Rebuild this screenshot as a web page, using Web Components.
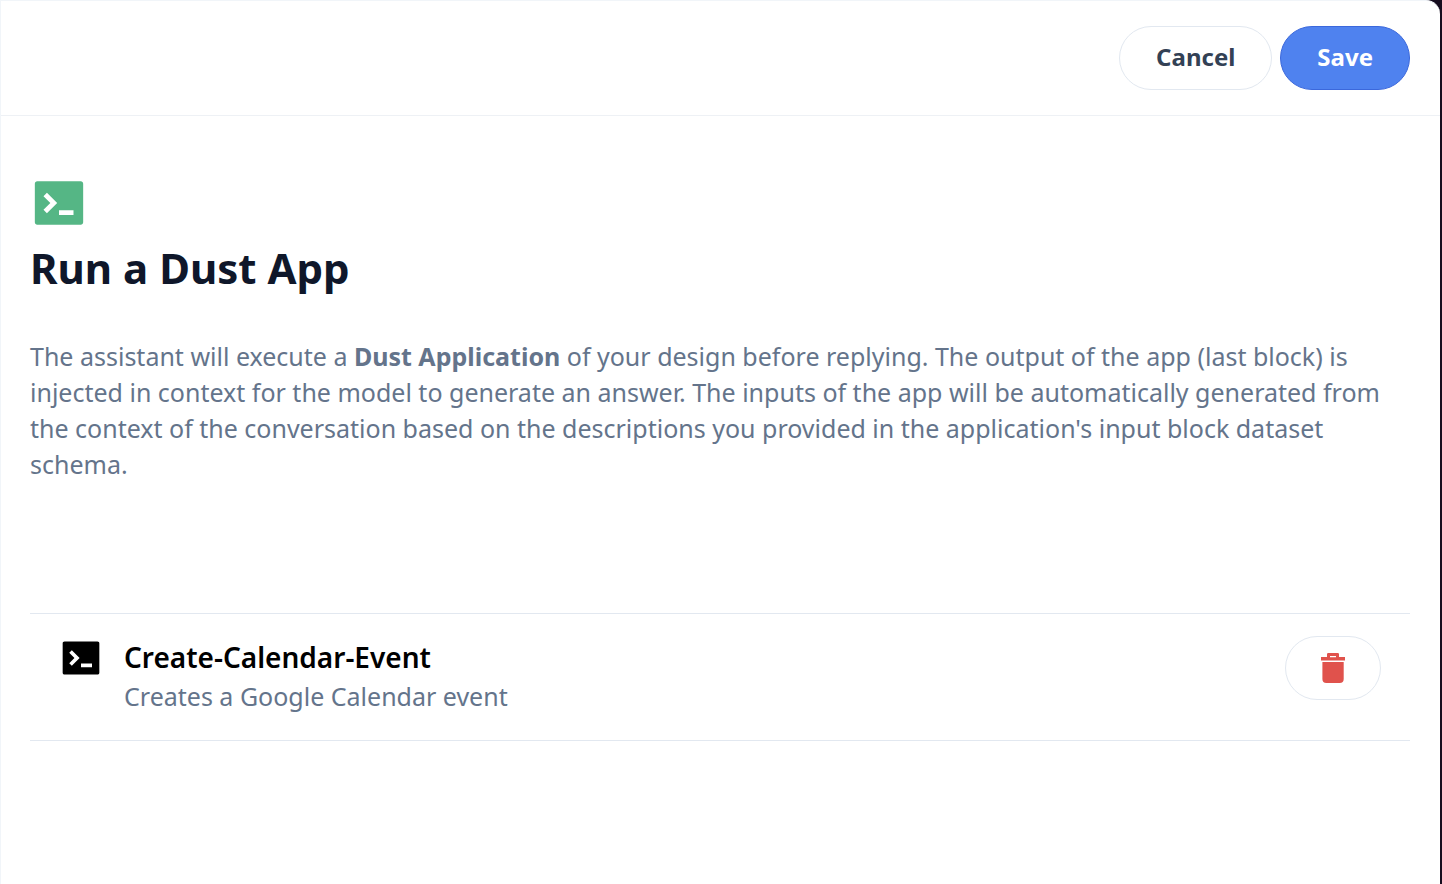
<!DOCTYPE html>
<html lang="en">
<head>
<meta charset="utf-8">
<meta name="viewport" content="width=device-width, initial-scale=1">
<title>Run a Dust App</title>
<style>
body { margin: 0; background: #160d1e; font-family: "Noto Sans", "Open Sans", sans-serif; color: #0f172a; }
</style>
</head>
<body>
<app-sheet>
  <pill-button slot="actions">Cancel</pill-button>
  <pill-button slot="actions" variant="primary">Save</pill-button>
  <action-intro heading="Run a Dust App">The assistant will execute a <strong>Dust Application</strong> of your design before replying. The output of the app (last block) is injected in context for the model to generate an answer. The inputs of the app will be automatically generated from the context of the conversation based on the descriptions you provided in the application's input block dataset schema.</action-intro>
  <app-item>
    <span slot="name">Create-Calendar-Event</span>
    <span slot="description">Creates a Google Calendar event</span>
  </app-item>
</app-sheet>
<script>
const define = (name, html, setup) => {
  const template = document.createElement('template');
  template.innerHTML = html;
  customElements.define(name, class extends HTMLElement {
    constructor() {
      super();
      this.attachShadow({ mode: 'open' }).append(template.content.cloneNode(true));
    }
    connectedCallback() {
      if (setup) setup(this, this.shadowRoot);
    }
  });
};

define('terminal-icon', `
<style>
  :host { display: block; width: var(--size, 24px); height: var(--size, 24px); flex: none; }
  svg { display: block; width: 100%; height: 100%; }
</style>
<svg viewBox="0 0 24 24" fill="currentColor" aria-hidden="true"><path d="M3 3H21C21.5523 3 22 3.44772 22 4V20C22 20.5523 21.5523 21 21 21H3C2.44772 21 2 20.5523 2 20V4C2 3.44772 2.44772 3 3 3ZM12 15V17H18V15H12ZM8.41421 12L5.58579 14.8284L7 16.2426L11.2426 12L7 7.75736L5.58579 9.17157L8.41421 12Z"/></svg>`);

define('trash-icon', `
<style>
  :host { display: block; }
  svg { display: block; }
</style>
<svg width="24" height="30" viewBox="0 0 24 30" fill="currentColor" aria-hidden="true"><path fill-rule="evenodd" d="M6 4V1.2Q6 0 7.2 0H16.8Q18 0 18 1.2V4H24V7.6H0V4ZM9 3V4.2H15V3Z"/><path d="M1.4 9H22.7V26Q22.7 30 18.7 30H5.4Q1.4 30 1.4 26Z"/></svg>`);

define('pill-button', `
<style>
  :host { display: block; }
  button {
    display: flex; align-items: center; justify-content: center;
    box-sizing: border-box; height: 64px; padding: 0 36px 2px;
    border: 1px solid #e2e8f0; border-radius: 32px;
    background: #fff; color: #334155;
    font-family: inherit; font-size: 24px; line-height: 32px; font-weight: 700; cursor: pointer;
  }
  :host([variant="primary"]) button { background: #4f82ef; border-color: #3b68dc; color: #fff; }
  :host([variant="danger"]) button { padding: 0 35px; color: #e0524c; }
</style>
<button type="button"><slot></slot></button>`, (host, root) => {
  const label = host.getAttribute('label');
  if (label) root.querySelector('button').setAttribute('aria-label', label);
});

define('app-sheet', `
<style>
  :host {
    display: block; box-sizing: border-box; min-height: 100vh; margin-right: 2px;
    border: 1px solid #f1f5f9; border-width: 1px 0 0 1px;
    border-radius: 0 14px 0 0; background: #fff;
  }
  header {
    display: flex; justify-content: flex-end; gap: 8px;
    padding: 25px 30px; border-bottom: 1px solid #eef1f5;
  }
  main { padding: 58px 30px 48px 29px; }
</style>
<header><slot name="actions"></slot></header>
<main><slot></slot></main>`);

define('action-intro', `
<style>
  :host { display: block; }
  terminal-icon { --size: 58px; color: #55b685; }
  h1 { margin: 8px 0 0; font-size: 42px; line-height: 56px; font-weight: 700; color: #0f172a; }
  p { margin: 42px 0 0; font-size: 25px; line-height: 36px; color: #64748b; }
</style>
<terminal-icon></terminal-icon>
<h1></h1>
<p><slot></slot></p>`, (host, root) => {
  root.querySelector('h1').textContent = host.getAttribute('heading');
});

define('app-item', `
<style>
  :host {
    display: flex; align-items: flex-start; gap: 21px;
    margin-top: 131px; padding: 22px 29px 26px;
    border: 1px solid #e2e8f0; border-width: 1px 0;
  }
  terminal-icon { --size: 44px; color: #000; }
  .text { flex: 1; min-width: 0; }
  h2 { margin: 0; font-size: 28px; line-height: 42px; font-weight: 600; color: #000; }
  p { margin: 0; font-size: 25px; line-height: 36px; color: #64748b; }
</style>
<terminal-icon></terminal-icon>
<div class="text">
  <h2><slot name="name"></slot></h2>
  <p><slot name="description"></slot></p>
</div>
<pill-button variant="danger" label="Remove app"><trash-icon></trash-icon></pill-button>`);
</script>
</body>
</html>
